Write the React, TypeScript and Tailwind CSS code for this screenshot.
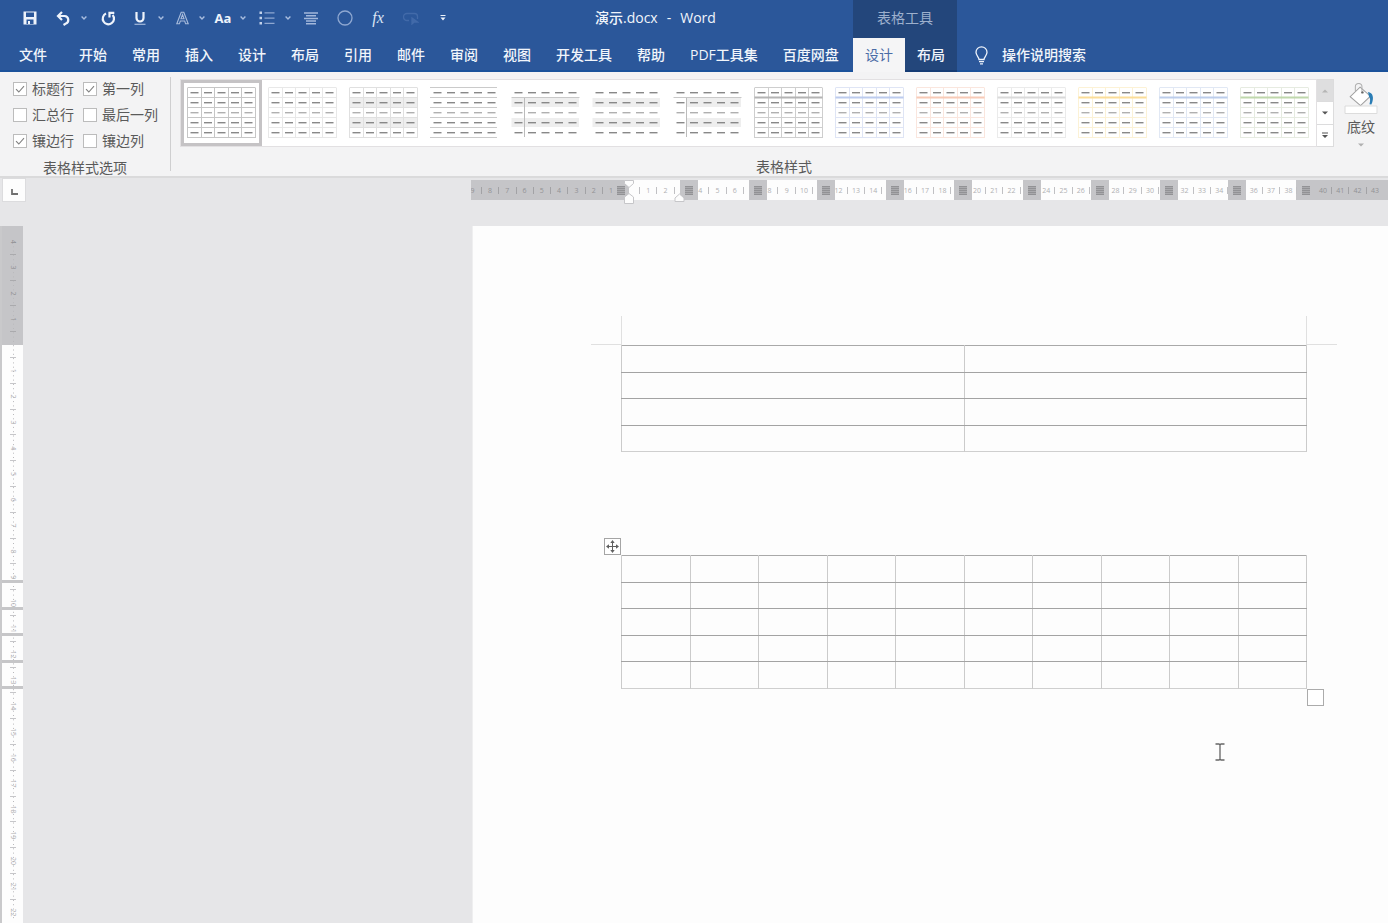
import React from "react";

type Thumb = {
  name: string;
  grid?: string;
  header?: string;
  lines?: string;
  bands?: "all" | "body";
  firstCol?: boolean;
};

const THUMBS: Thumb[] = [
  { name: "网格型", grid: "#c6c6c6" },
  { name: "网格型浅色", grid: "#e8e8e8" },
  { name: "无格式表格 1", grid: "#e0e0e0", bands: "all" },
  { name: "无格式表格 2", lines: "#cacaca" },
  { name: "无格式表格 3", header: "#c8c8c8", bands: "all", firstCol: true },
  { name: "无格式表格 4", bands: "all" },
  { name: "无格式表格 5", header: "#c8c8c8", bands: "body", firstCol: true },
  { name: "网格表 1 浅色", grid: "#cecece", header: "#b4b4b4" },
  { name: "网格表 1 浅色 - 着色 1", grid: "#dfe5f5", header: "#bccbee" },
  { name: "网格表 1 浅色 - 着色 2", grid: "#fae6de", header: "#f8cab6" },
  { name: "网格表 1 浅色 - 着色 3", grid: "#ebebeb", header: "#dadada" },
  { name: "网格表 1 浅色 - 着色 4", grid: "#fcf2d6", header: "#fbdd98" },
  { name: "网格表 1 浅色 - 着色 5", grid: "#e1e8f4", header: "#bccdeb" },
  { name: "网格表 1 浅色 - 着色 6", grid: "#e6ebe1", header: "#bfd8ac" },
];

const FIVE = [0, 1, 2, 3, 4];
const SIX = [0, 1, 2, 3, 4, 5];
const CW = 13.5;
const RH = 10;

function StyleThumb({ t }: { t: Thumb }) {
  const bandX = t.bands === "body" ? CW : 0;
  return (
    <svg width="69" height="52" viewBox="0 0 69 52" aria-hidden="true">
      {t.bands &&
        [1, 3].map((r) => (
          <rect key={r} x={0.5 + bandX} y={r * RH + 1} width={67.5 - bandX} height={RH - 1} fill="#eeeeee" />
        ))}
      {t.grid &&
        SIX.map((i) => (
          <g key={i} stroke={t.grid} strokeWidth="1">
            <line x1={0.5 + Math.round(i * CW)} y1="1" x2={0.5 + Math.round(i * CW)} y2="51" />
            <line x1="0.5" y1={0.5 + i * RH} x2="68.5" y2={0.5 + i * RH} />
          </g>
        ))}
      {t.lines &&
        SIX.map((i) => (
          <line key={i} x1="0" y1={0.5 + i * RH} x2="67" y2={0.5 + i * RH} stroke={t.lines} strokeWidth="1" />
        ))}
      {t.header && <line x1="0.5" y1="10.5" x2="68.5" y2="10.5" stroke={t.header} strokeWidth={t.grid ? 2 : 1} />}
      {t.firstCol && <line x1="13.5" y1="11" x2="13.5" y2="50" stroke="#bcbcbc" strokeWidth="1" />}
      {FIVE.map((r) =>
        FIVE.map((c) => (
          <rect key={`${r}-${c}`} x={3.5 + c * CW} y={5 + r * RH} width="8" height="1.4" fill={r === 2 ? "#b0b0b0" : "#888"} />
        ))
      )}
    </svg>
  );
}

function Caret({ className = "" }: { className?: string }) {
  return (
    <button aria-label="更多" className={`flex h-6 w-2 shrink-0 items-center justify-center ${className}`}>
      <svg width="6" height="4" viewBox="0 0 6 4" fill="none" stroke="#a9bddf" strokeWidth="1.4">
        <path d="M0.6 0.6 3 3l2.4-2.4" />
      </svg>
    </button>
  );
}

function Tool({ label, className = "", children }: { label: string; className?: string; children: React.ReactNode }) {
  return (
    <button aria-label={label} className={`flex h-6 w-4 shrink-0 items-center justify-center ${className}`}>
      {children}
    </button>
  );
}

function QuickAccess() {
  return (
    <div className="flex w-[595px] shrink-0 items-center pl-[22px]">
      <Tool label="保存">
        <svg width="14" height="14" viewBox="0 0 14 14">
          <path d="M0.5 0.5h13v13h-13z" fill="#eef3fb" />
          <path d="M3 1.5h8v4.5H3z" fill="#2b579a" />
          <path d="M3.5 8.5h7v4.500h-7z" fill="#2b579a" />
          <path d="M5 10h2v3H5z" fill="#eef3fb" />
        </svg>
      </Tool>
      <Tool label="撤消" className="ml-[17px]">
        <svg width="15" height="15" viewBox="0 0 15 15" fill="none" stroke="#eef3fb" strokeWidth="2.200">
          <path d="M2 5h6.500a4 4 0 0 1 1 7.800L7.500 14" />
          <path d="M6 1 2 5l4 4" />
        </svg>
      </Tool>
      <Caret className="ml-[9px]" />
      <Tool label="重复" className="ml-[12px]">
        <svg width="15" height="15" viewBox="0 0 15 15" fill="none" stroke="#eef3fb" strokeWidth="2.200">
          <path d="M5 2.600A5.600 5.600 0 1 0 11.600 4" />
          <path d="M8.500 6.400V1.800h4.800" />
        </svg>
      </Tool>
      <Tool label="下划线" className="ml-[16px]">
        <svg width="12" height="15" viewBox="0 0 12 15" fill="none" stroke="#eef3fb">
          <path d="M2.500 1v6a3.500 3.500 0 0 0 7 0V1" strokeWidth="2.200" />
          <path d="M0.500 13.300h11" strokeWidth="1.200" stroke="#a3b8db" />
        </svg>
      </Tool>
      <Caret className="ml-[9px]" />
      <Tool label="文本效果" className="ml-[9px]">
        <svg width="13" height="14" viewBox="0 0 13 14" fill="none" stroke="#a9bcdc" strokeWidth="1.100">
          <path d="M0.800 12.800 5.200 1.200h2.600l4.400 11.600H9.600l-.9-2.800H4.300l-.9 2.800zM5 7.800h3L6.500 3.600z" />
        </svg>
      </Tool>
      <Caret className="ml-[8px]" />
      <Tool label="更改大小写" className="ml-[9px] text-[13px] font-bold leading-4 text-[#eef3fb]">
        Aa
      </Tool>
      <Caret className="ml-[8px]" />
      <Tool label="项目符号" className="ml-[12px]">
        <svg width="16" height="14" viewBox="0 0 16 14" fill="#c3d2ea">
          <path d="M0.500 0.500h2.500v2.500H0.500zM0.500 5.700h2.500v2.500H0.500zM0.500 11h2.500v2.500H0.500z" />
          <path d="M5.500 1.300h10v1.200h-10zM5.500 6.500h10v1.200h-10zM5.500 11.800h10v1.200h-10z" fill="#8fa8d1" />
        </svg>
      </Tool>
      <Caret className="ml-[9px]" />
      <Tool label="居中" className="ml-[11px]">
        <svg width="14" height="13" viewBox="0 0 14 13" stroke="#a3b8db" strokeWidth="1.500">
          <path d="M0 1h14M2 3.700h10M0 6.400h14M2 9.100h10M2 11.800h10" />
        </svg>
      </Tool>
      <Tool label="形状" className="ml-[18px]">
        <svg width="16" height="16" viewBox="0 0 16 16" fill="none" stroke="#8fa8d1" strokeWidth="1.300">
          <circle cx="8" cy="8" r="7" />
        </svg>
      </Tool>
      <Tool label="公式" className="ml-[17px] font-['Liberation_Serif',serif] text-[16px] italic leading-4 text-[#dbe5f4]">
        fx
      </Tool>
      <Tool label="转换" className="ml-[17px]">
        <svg width="16" height="14" viewBox="0 0 16 14" fill="none" stroke="#426aa9" strokeWidth="1.300">
          <path d="M6 9.500H4a3.500 3.500 0 0 1 0-7h7.500a3 3 0 0 1 3 3V8" />
          <path d="M9 7v6l2.200-2h3.300z" fill="#426aa9" />
        </svg>
      </Tool>
      <button aria-label="自定义快速访问工具栏" className="ml-5 flex h-6 w-2 shrink-0 items-center justify-center">
        <svg width="6" height="6" viewBox="0 0 6 6" fill="#eef3fb">
          <path d="M0.500 0h5v1h-5zM0.500 2.400h5L3 5.400z" />
        </svg>
      </button>
    </div>
  );
}

const TABS = ["开始", "常用", "插入", "设计", "布局", "引用", "邮件", "审阅", "视图", "开发工具", "帮助", "PDF工具集", "百度网盘"];

function Header() {
  return (
    <header className="flex h-[72px] overflow-hidden bg-[#2b579a] text-sm font-medium text-[#f1f5fb]">
      <div className="flex w-[853px] shrink-0 flex-col">
        <div className="flex h-[38px] items-center pb-[2px]">
          <QuickAccess />
          <h1 className="flex gap-[9px] whitespace-nowrap leading-5">
            <span>演示.docx</span>
            <span>-</span>
            <span>Word</span>
          </h1>
        </div>
        <nav className="flex h-[34px] items-center gap-[25px] whitespace-nowrap border-b-2 border-[#1b529b] pl-[19px] pt-[2px]">
          <button className="mr-[7px]">文件</button>
          {TABS.map((t) => (
            <button key={t}>{t}</button>
          ))}
        </nav>
      </div>
      <div className="flex w-[104px] shrink-0 flex-col bg-[#23467b]">
        <div className="flex h-[38px] items-center justify-center pb-[2px] font-normal text-[#9db0cd]">表格工具</div>
        <div className="grid h-[34px] grid-cols-2">
          <button className="bg-[#f5f5f6] font-normal text-[#4a6ca6]">设计</button>
          <button className="border-b-2 border-[#153c74] pt-[2px]">布局</button>
        </div>
      </div>
      <div className="flex min-w-0 flex-1 flex-col justify-end">
        <button className="flex h-[34px] items-center gap-[13px] whitespace-nowrap border-b-2 border-[#1b529b] pl-[17px] pt-[2px]">
          <svg width="15" height="19" viewBox="0 0 15 19" fill="none" stroke="#eef3fb" strokeWidth="1.300">
            <path d="M5 13.500c0-2.300-3-3.800-3-7.200a5.500 5.500 0 0 1 11 0c0 3.400-3 4.900-3 7.200z" />
            <path d="M5 15.600h5M6 17.800h3" />
          </svg>
          操作说明搜索
        </button>
      </div>
    </header>
  );
}

function Option({ label, checked = false }: { label: string; checked?: boolean }) {
  return (
    <label className="flex h-[26px] items-center gap-[5px] whitespace-nowrap">
      <span className="grid">
        <input
          type="checkbox"
          defaultChecked={checked}
          className="peer col-start-1 row-start-1 size-[14px] appearance-none border border-[#bcbcbc] bg-white"
        />
        <svg
          className="pointer-events-none invisible col-start-1 row-start-1 size-[14px] peer-checked:visible"
          viewBox="0 0 14 14"
          fill="none"
          stroke="#808080"
          strokeWidth="1.1"
        >
          <path d="M3 7.200 5.800 10 11 4.200" />
        </svg>
      </span>
      {label}
    </label>
  );
}

function Ribbon() {
  return (
    <section className="flex h-[106px] border-b-2 border-[#dadadb] bg-[#f3f3f4] text-sm leading-5 text-[#5a5a5a]">
      <div className="flex w-[170px] shrink-0 flex-col pt-1">
        <div className="grid grid-cols-[70px_auto] justify-start pl-[13px]">
          <Option label="标题行" checked />
          <Option label="第一列" checked />
          <Option label="汇总行" />
          <Option label="最后一列" />
          <Option label="镶边行" checked />
          <Option label="镶边列" />
        </div>
        <div className="pt-[2px] text-center leading-6">表格样式选项</div>
      </div>
      <div className="my-[5px] w-px shrink-0 bg-[#cfcfd0]" />
      <div className="flex min-w-0 flex-1 flex-col pl-[9px] pt-[7px]">
        <div className="flex h-[68px]">
          <div className="flex min-w-0 flex-1 overflow-hidden border border-[#e2e0e2] bg-white">
            {THUMBS.map((t, i) => (
              <button
                key={t.name}
                aria-label={t.name}
                className={`flex w-[81px] shrink-0 items-center justify-center border-[3px] ${
                  i === 0 ? "border-[#c5c3c5]" : "border-transparent"
                }`}
              >
                <StyleThumb t={t} />
              </button>
            ))}
          </div>
          <div className="flex w-[17px] shrink-0 flex-col divide-y divide-[#dcdcdd] border border-l-0 border-[#dcdcdd] bg-white">
            <button aria-label="上一行" className="flex flex-1 items-center justify-center bg-[#dededf]">
              <svg width="6" height="4" viewBox="0 0 6 4" fill="#b5b5b5"><path d="M0 3.500h6L3 0.500z" /></svg>
            </button>
            <button aria-label="下一行" className="flex flex-1 items-center justify-center">
              <svg width="6" height="4" viewBox="0 0 6 4" fill="#555"><path d="M0 0.500h6L3 3.500z" /></svg>
            </button>
            <button aria-label="其他" className="flex flex-1 items-center justify-center">
              <svg width="6" height="7" viewBox="0 0 6 7" fill="#555"><path d="M0 0.500h6v1H0zM0 3h6L3 6z" /></svg>
            </button>
          </div>
          <button className="flex w-[54px] shrink-0 flex-col items-center pt-1">
            <svg width="36" height="33" viewBox="0 0 36 33" fill="none">
              <path d="M17 4.500 28 14 17.500 24 6.500 14.500z" fill="#fff" stroke="#a0a0a0" strokeWidth="1.100" />
              <path d="M12 8.500V4a3.500 3.500 0 0 1 7 0v5" stroke="#b0b0b0" strokeWidth="1.100" />
              <circle cx="19.500" cy="10" r="1.300" fill="#666" />
              <path d="M25.500 9.500c5 .5 7 6 3.500 13.500l-2-.5c1-3.500 1-6-.5-8z" fill="#2a7db5" />
              <path d="M1 24.500h34v8H1z" fill="#fff" stroke="#dadada" />
            </svg>
            <span className="mt-[3px] leading-5">底纹</span>
            <svg className="mt-[6px] shrink-0" width="6" height="4" viewBox="0 0 6 4" fill="#b0b0b0"><path d="M0 0.500h6L3 3.500z" /></svg>
          </button>
        </div>
        <div className="mt-[10px] text-center leading-5">表格样式</div>
      </div>
    </section>
  );
}

const range = (n: number) => Array.from({ length: n }, (_, i) => i);

function HorizontalRuler() {
  const origin = 158;
  return (
    <svg className="h-[26px] min-w-0 flex-1" fontSize="7" textAnchor="middle" aria-label="水平标尺">
      <rect x="0" y="0" width="4000" height="20" fill="#c5c5c8" />
      <rect x={origin} y="0" width="667" height="20" fill="#fdfdfd" />
      {range(9).map((i) => (
        <g key={i} fill="#929295">
          <text x={origin - 18 - i * 17.3} y="13">{i + 1}</text>
          <rect x={Math.round(origin - 27 - i * 17.3)} y="7" width="1" height="7" fill="#a2a2a5" />
        </g>
      ))}
      {range(43).map((i) => (
        <g key={i} fill={i > 38 ? "#929295" : "#b0b0b3"}>
          <text x={origin + 19.3 + i * 17.3} y="13">{i + 1}</text>
          <rect x={Math.round(origin + 10 + i * 17.3)} y="7" width="1" height="7" fill={i > 38 ? "#a2a2a5" : "#c0c0c3"} />
        </g>
      ))}
      {range(11).map((i) => {
        const x = Math.round(origin - 8.5 + i * 68.5);
        return (
          <g key={i}>
            <rect x={x - 9} y="0" width={i === 0 ? 17 : 18} height="20" fill="#c5c5c8" />
            <rect x={x - 4} y="6" width="8" height="9" fill="#aaaaad" />
            <path d={`M${x - 4} 6.500h8M${x - 4} 8.500h8M${x - 4} 10.500h8M${x - 4} 12.500h8M${x - 4} 14.500h8`} stroke="#929295" />
          </g>
        );
      })}
      <g fill="#fdfdfd" stroke="#c6c6c9" strokeWidth="1">
        <path d="M153.500 0.500h9v3l-4.500 4-4.500-4z" />
        <path d="M158 13.500l4.500 3.500v6.500h-9V17z" />
        <path d="M208.500 14l4.500 4v3.500h-9V18z" />
      </g>
    </svg>
  );
}

function VerticalRuler() {
  const origin = 119;
  return (
    <div className="relative w-6 shrink-0 overflow-hidden border-l-2 border-[#c9c9cb]">
      <svg className="absolute inset-0 h-full w-full" fontSize="7" textAnchor="middle" aria-label="垂直标尺">
        <rect x="0" y="0" width="21" height="4000" fill="#fdfdfd" />
        <rect x="0" y="0" width="21" height={origin} fill="#c5c5c8" />
        {range(158).map((i) => (
          <rect key={i} x="11" y={16 + i * 4.3} width="1" height="1" fill="#b9b9bc" />
        ))}
        {range(27).map((i) => {
          const n = i - 4;
          const y = origin + n * 25.8;
          return (
            <g key={i} fill={n < 0 ? "#929295" : "#b0b0b3"}>
              {n !== 0 && <text transform={`translate(8.500 ${y}) rotate(90)`}>{Math.abs(n)}</text>}
              <rect x="8" y={Math.round(y + 12)} width="6" height="1" fill={n < 0 ? "#aaaaad" : "#c6c6c9"} />
            </g>
          );
        })}
        {[354, 381, 407, 434, 460].map((y) => (
          <rect key={y} x="0" y={y} width="21" height="3" fill="#c6c6c8" />
        ))}
      </svg>
    </div>
  );
}

function DocTable({ rows, cols, label }: { rows: number; cols: number; label: string }) {
  return (
    <table aria-label={label} className="w-full table-fixed border-collapse border border-[#cfcfcf] border-t-[#a9a9a9]">
      <tbody>
        {range(rows).map((r) => (
          <tr key={r} className={r % 2 === 0 ? "h-[27px]" : "h-[26px]"}>
            {range(cols).map((c) => (
              <td
                key={c}
                className={`border-x border-x-[#cbcbcb] p-0 ${r < rows - 1 ? "border-b border-b-[#a3a3a3]" : ""}`}
              />
            ))}
          </tr>
        ))}
      </tbody>
    </table>
  );
}

export default function App() {
  return (
    <div className="flex min-h-screen flex-col overflow-x-hidden bg-[#e6e6e8] font-['Open_Sans','Noto_Sans_CJK_SC',sans-serif]">
      <Header />
      <Ribbon />
      <div className="flex h-12 shrink-0">
        <button
          aria-label="制表符"
          className="ml-[2px] flex size-6 shrink-0 items-center justify-center border border-[#dcdcde] bg-[#fdfdfd]"
        >
          <svg className="mt-[3px]" width="7" height="6" viewBox="0 0 7 6" fill="none" stroke="#707070" strokeWidth="1.800">
            <path d="M1 0v5h6" />
          </svg>
        </button>
        <div className="ml-[445px] flex min-w-0 flex-1 pt-[2px]">
          <HorizontalRuler />
        </div>
      </div>
      <main className="flex flex-1">
        <VerticalRuler />
        <article className="relative ml-[448px] min-w-0 flex-1 border-l border-[#efeff0] bg-[#fdfdfd] pb-24 pl-[118px] pr-[51px] pt-[90px]">
          <div className="flex h-[29px]">
            <div className="w-[30px] border-b border-[#e0e0e0]" />
            <div className="flex-1 border-x border-[#e0e0e0]" />
            <div className="w-[30px] border-b border-[#e0e0e0]" />
          </div>
          <div className="mx-[30px]">
            <DocTable rows={4} cols={2} label="表格 1" />
            <div className="relative mt-[103px]">
              <DocTable rows={5} cols={10} label="表格 2" />
              <button
                aria-label="移动表格"
                className="absolute -left-[17px] -top-[17px] flex size-[17px] items-center justify-center border border-[#a5a5a5] bg-white"
              >
                <svg width="13" height="13" viewBox="0 0 13 13" fill="#606060">
                  <path d="M6 1.500h1v10H6zM1.500 6h10v1h-10z" />
                  <path d="M6.500 0 8.700 3H4.300zM6.500 13 4.300 10h4.400zM0 6.500 3 4.300v4.400zM13 6.500 10 8.700V4.300z" />
                </svg>
              </button>
              <button aria-label="调整表格大小" className="absolute -bottom-[17px] -right-[17px] size-[17px] border border-[#ababab] bg-white" />
              <svg className="absolute -bottom-[72px] right-[82px]" width="10" height="18" viewBox="0 0 10 18" fill="none" stroke="#666" strokeWidth="1.300" aria-hidden="true">
                <path d="M0.500 1H4l1 .8L6 1h3.500M5 1.800v14.400M0.500 17H4l1-.8 1 .8h3.500" />
              </svg>
            </div>
          </div>
        </article>
      </main>
    </div>
  );
}
